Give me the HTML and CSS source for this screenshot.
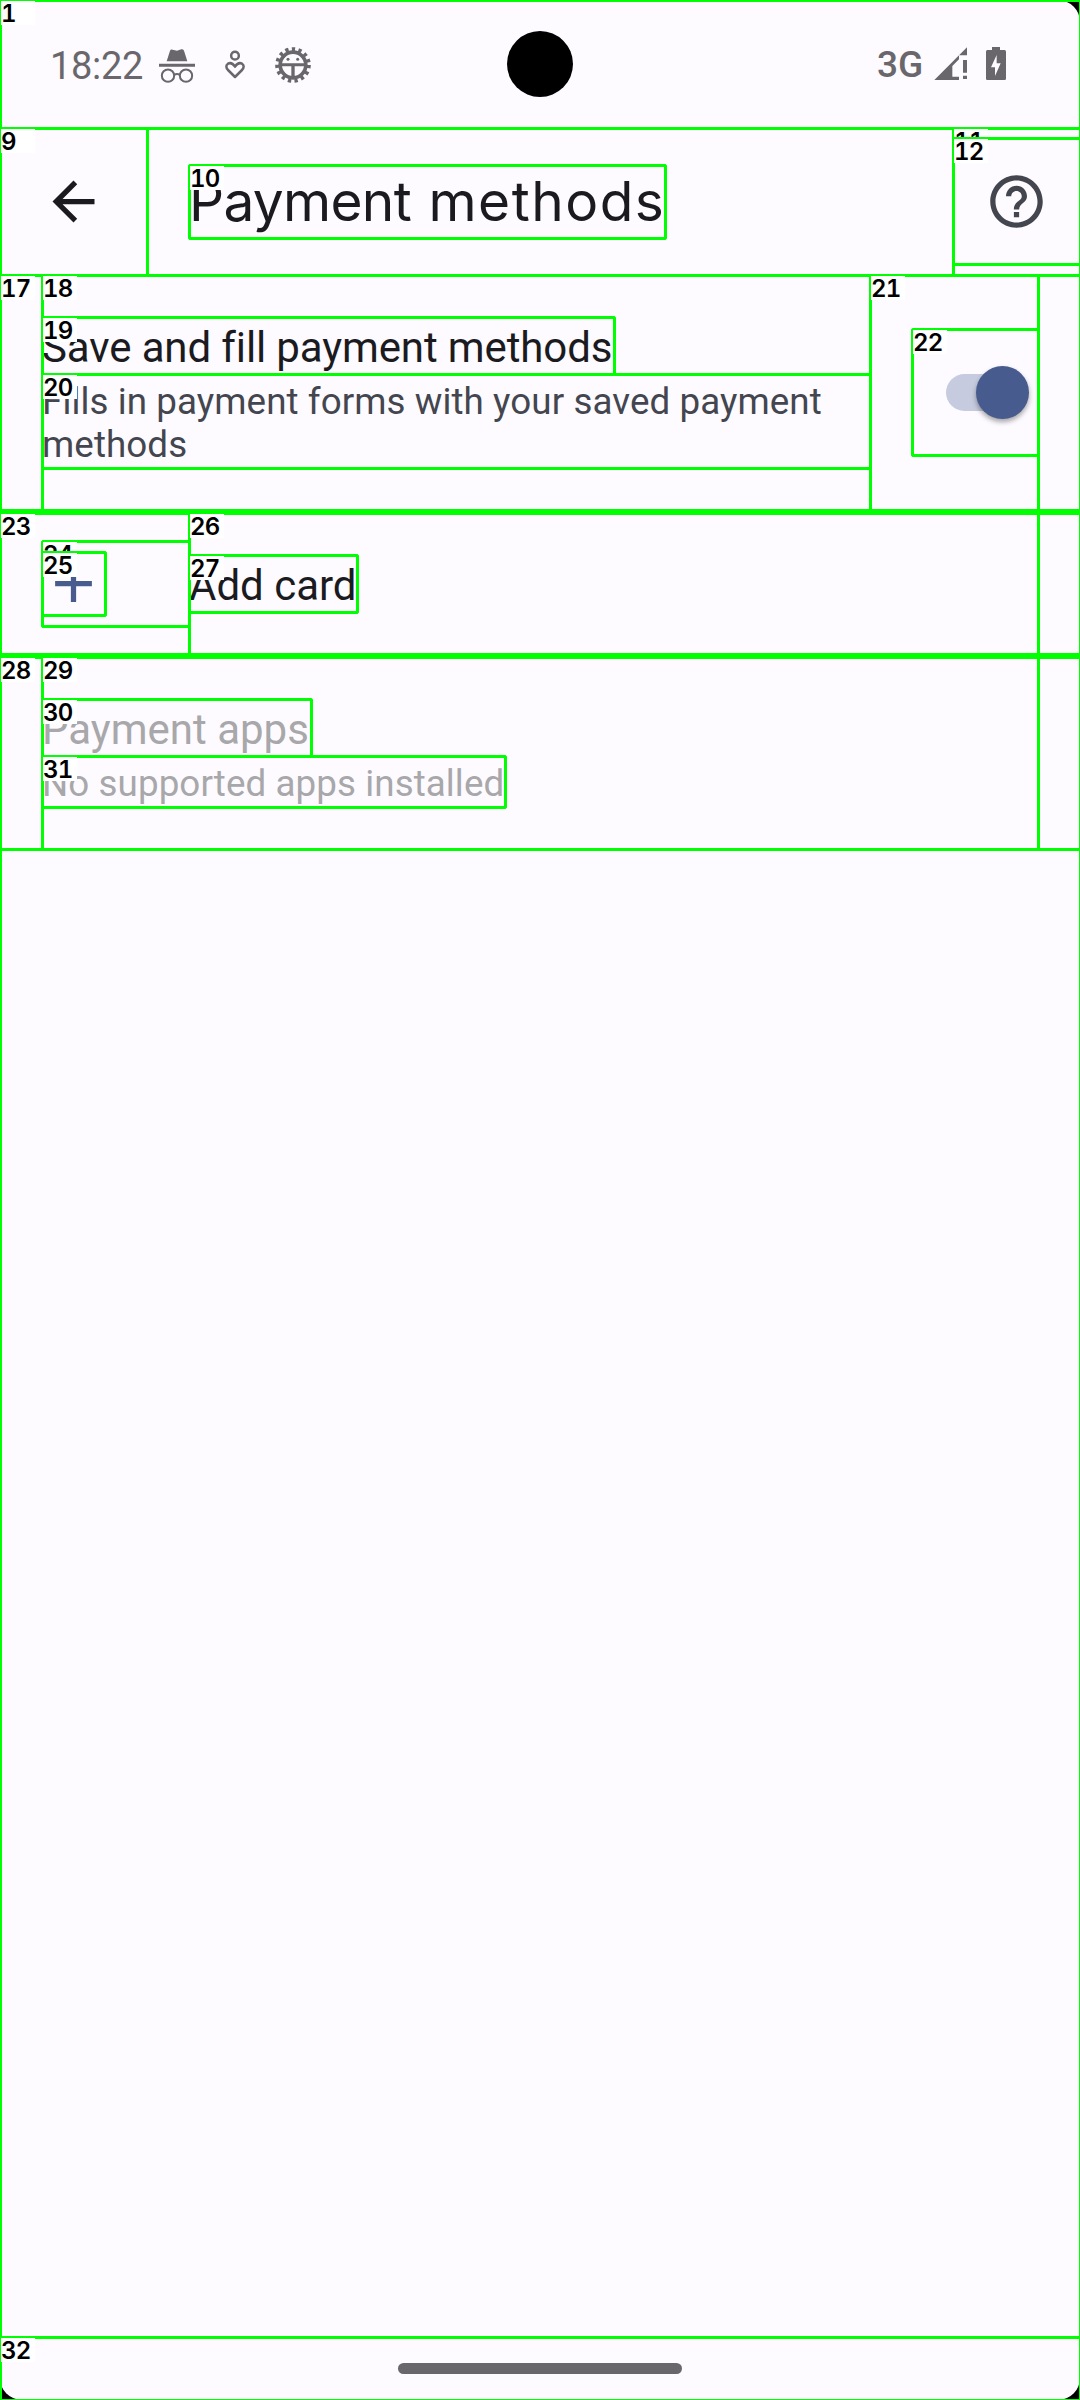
FILE: index.html
```html
<!DOCTYPE html>
<html lang="en">
<head>
<meta charset="utf-8">
<title>Payment methods</title>
<link rel="stylesheet" href="styles.css">
</head>
<body>
<div class="screen">
  <header class="status">
    <span class="clock">18:22</span>
    <svg class="ic-incognito" viewBox="477 138 108 114">
      <path fill="currentColor" d="M500 184L510 152Q512 147 518 149L531 152L544 148Q550 146 552 152L562 184ZM477 191.500H585V200H477Z"/>
      <g fill="none" stroke="currentColor" stroke-width="6"><circle cx="504" cy="227" r="18.500"/><circle cx="558" cy="227" r="18.500"/><path d="M522 225Q531 219 540 225"/></g>
    </svg>
    <svg class="ic-heart" viewBox="675 138 60 114">
      <g fill="none" stroke="currentColor" stroke-width="7.500"><circle cx="705" cy="167" r="11.500"/><path stroke-linejoin="round" d="M705 231L684 210Q674 198 684 191Q695 185 705 200Q715 185 726 191Q736 198 726 210Z"/></g>
    </svg>
    <svg class="ic-bug" viewBox="822 138 114 114">
      <circle cx="879" cy="195" r="47" fill="none" stroke="currentColor" stroke-width="13" stroke-dasharray="9.800 9.890"/>
      <circle cx="879" cy="195" r="38.500" fill="none" stroke="currentColor" stroke-width="11"/>
      <path fill="currentColor" d="M841 190H917V199H884V234H874V199H841Z"/>
      <circle cx="864" cy="178" r="4.500" fill="currentColor"/><circle cx="893" cy="178" r="4.500" fill="currentColor"/>
    </svg>
    <span class="network">3G</span>
    <svg class="ic-signal" viewBox="342 138 102 104">
      <path fill="currentColor" d="M343 240L441 142V166H417V178L397 198V230H417V240ZM429 180H441V218H429ZM429 227H441V237H429Z"/>
    </svg>
    <svg class="ic-battery" viewBox="498 138 60 104">
      <path fill="currentColor" fill-rule="evenodd" d="M516 141H540V150H554Q558 150 558 155V236Q558 240 554 240H502Q498 240 498 236V155Q498 150 502 150H516ZM530 165L513 202H525V228L542 190H530Z"/>
    </svg>
    <div class="camera"></div>
  </header>

  <div class="toolbar">
    <svg class="ic-back" viewBox="0 0 24 24"><path fill="currentColor" d="M20 11H7.830l5.590-5.590L12 4l-8 8 8 8 1.410-1.410L7.830 13H20v-2z"/></svg>
    <h1 class="title"><span class="title-tight">Payment</span> <span class="title-wide">methods</span></h1>
    <svg class="ic-help" viewBox="0 0 24 24"><path fill="currentColor" d="M11 18h2v-2h-2v2zm1-16C6.480 2 2 6.480 2 12s4.480 10 10 10 10-4.480 10-10S17.520 2 12 2zm0 18c-4.410 0-8-3.590-8-8s3.590-8 8-8 8 3.590 8 8-3.590 8-8 8zm0-14c-2.210 0-4 1.790-4 4h2c0-1.100.9-2 2-2s2 .9 2 2c0 2-3 1.750-3 5h2c0-2.250 3-2.500 3-5 0-2.210-1.790-4-4-4z"/></svg>
  </div>

  <main class="prefs">
    <section class="pref pref-save">
      <div class="pref-text">
        <div class="label label-save">Save and fill payment methods</div>
        <div class="summary summary-save">Fills in payment forms with your saved payment methods</div>
      </div>
      <div class="switch"><div class="thumb"></div></div>
    </section>
    <section class="pref pref-add">
      <svg class="ic-add" viewBox="0 0 24 24"><path fill="currentColor" d="M19 13h-6v6h-2v-6H5v-2h6V5h2v6h6v2z"/></svg>
      <div class="label label-add">Add card</div>
    </section>
    <section class="pref pref-apps">
      <div class="pref-text">
        <div class="label label-apps">Payment apps</div>
        <div class="summary summary-apps">No supported apps installed</div>
      </div>
    </section>
  </main>

  <footer class="nav"><div class="pill"></div></footer>
</div>
<svg class="marks" viewBox="0 0 1080 2400"></svg>
<script src="marks.js"></script>
</body>
</html>
```

FILE: styles.css
```css
* { box-sizing: border-box; }
body { margin: 0; background: #000; font-family: Roboto, sans-serif; color: #1b1b1f; }
svg { display: block; flex: none; }
.screen { width: 1080px; height: 2400px; display: flex; flex-direction: column; background: #fdfbff; border-radius: 22px; overflow: hidden; }

.status { position: relative; height: 128px; display: flex; align-items: flex-start; padding: 46px 74px 0 50px; color: #69676b; }
.clock { width: 109px; padding-top: 1px; font-size: 38px; font-weight: 370; line-height: 38px; letter-spacing: -0.3px; white-space: nowrap; }
.ic-incognito { width: 36px; height: 38px; }
.ic-heart { width: 20px; height: 38px; margin-left: 30px; }
.ic-bug { width: 38px; height: 38px; margin-left: 29px; }
.network { margin-left: auto; width: 57px; font: 480 37px/38px Roboto, sans-serif; white-space: nowrap; }
.ic-signal { width: 34px; height: 34.67px; }
.ic-battery { width: 20px; height: 34.67px; margin-left: 18px; }
.camera { position: absolute; left: 507px; top: 31px; width: 66px; height: 66px; border-radius: 50%; background: #000; }

.toolbar { height: 147px; display: flex; align-items: center; padding: 0 32px 0 42px; }
.ic-back { width: 63px; height: 63px; }
.title { flex: 1; margin: 0 0 0 84px; font: 400 55px/73px Inter, sans-serif; word-spacing: 2px; white-space: nowrap; }
.title-tight { letter-spacing: -0.7px; }
.title-wide { letter-spacing: 1.5px; }
.ic-help { width: 63px; height: 63px; color: #44464f; }

.prefs { flex: 1; display: flex; flex-direction: column; }
.pref { display: flex; padding: 42px 42px 0; }
.pref-save { height: 237px; }
.pref-add { height: 145px; }
.pref-apps { height: 194px; }
.pref-text { width: 828px; }
.label { height: 57px; padding-top: 2px; font-size: 42px; line-height: 57px; white-space: nowrap; }
.label-save { letter-spacing: -0.12px; }
.summary { padding-top: 6px; font-size: 36.75px; line-height: 43px; letter-spacing: 0.08px; color: #44464f; }
.switch { width: 79px; height: 37px; margin: 57px 0 0 76px; border-radius: 19px; background: #c6cbdf; display: flex; align-items: center; padding-left: 30px; }
.thumb { flex: none; width: 53px; height: 53px; border-radius: 50%; background: #485b8e; box-shadow: 0 3px 5px rgba(0, 0, 0, 0.35); }
.ic-add { width: 63px; height: 63px; margin-top: -2px; color: #485b8e; }
.label-add { margin-left: 84px; padding-top: 3px; }
.label-apps, .summary-apps { color: #a8a7aa; }

.nav { height: 63px; display: flex; justify-content: center; padding-top: 26px; }
.pill { width: 284px; height: 11px; border-radius: 5.5px; background: #69676b; }

.marks { position: absolute; left: 0; top: 0; width: 1080px; height: 2400px; }
.mark-box { fill: none; stroke: #00ff00; stroke-width: 3; stroke-linejoin: bevel; }
.mark-tag { fill: #fff; }
.mark-num { fill: #000; font: 600 24px Inter, sans-serif; font-variant-numeric: tabular-nums; letter-spacing: -0.8px; }
```

FILE: marks.js
```js
// Element outlines: number, left, top, right, bottom
const boxes = [
  [1, 0, 0, 1080, 2400],
  [9, 0, 128, 147, 275],
  [10, 189, 165, 665, 238],
  [11, 953, 128, 1080, 275],
  [12, 953, 138, 1080, 264],
  [17, 0, 275, 1080, 510],
  [18, 42, 275, 870, 510],
  [19, 42, 317, 614, 374],
  [20, 42, 374, 870, 468],
  [21, 870, 275, 1038, 510],
  [22, 912, 329, 1038, 455],
  [23, 0, 513, 1080, 654],
  [24, 42, 541, 189, 626],
  [25, 42, 552, 105, 615],
  [26, 189, 513, 1038, 654],
  [27, 189, 555, 357, 612],
  [28, 0, 657, 1080, 849],
  [29, 42, 657, 1038, 849],
  [30, 42, 699, 311, 756],
  [31, 42, 756, 505, 807],
  [32, 0, 2337, 1080, 2400],
];
const svg = document.querySelector(".marks");
function add(name, attrs, text) {
  const el = document.createElementNS("http://www.w3.org/2000/svg", name);
  for (const key in attrs) el.setAttribute(key, attrs[key]);
  if (text !== undefined) el.textContent = text;
  svg.appendChild(el);
}
// Toolbar separator lines shared by neighbouring outlines
add("rect", { class: "mark-box", x: 0.5, y: 128.5, width: 1080, height: 147 });
for (const [n, l, t, r, b] of boxes) {
  add("rect", { class: "mark-box", x: l + 0.5, y: t + 0.5, width: r - l, height: b - t });
  add("rect", { class: "mark-tag", x: l + 1, y: t + 1, width: 34, height: 24 });
  add("text", { class: "mark-num", x: l + 1, y: t + 22 }, n);
}
```
